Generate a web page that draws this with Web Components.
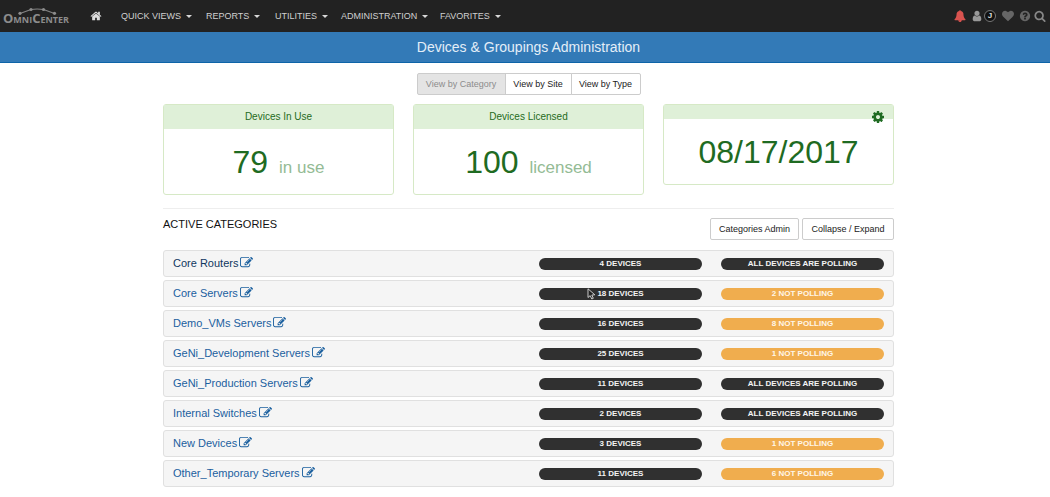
<!DOCTYPE html>
<html lang="en">
<head>
<meta charset="utf-8">
<title>OmniCenter - Devices &amp; Groupings Administration</title>
<style>
html{--sans:"Liberation Sans",Arial,Helvetica,sans-serif}
body{margin:0;background:#fff;font:11px/16px var(--sans);color:#111}
</style>
</head>
<body>
<oc-app></oc-app>
<script>
const ICONS={
home:'M1472 992v480q0 26-19 45t-45 19h-384v-384h-256v384h-384q-26 0-45-19t-19-45v-480q0-1 .5-3t.5-3l575-474 575 474q1 2 1 6zm223-69l-62 74q-8 9-21 11h-3q-13 0-21-7l-692-577-692 577q-12 8-24 7-13-2-21-11l-62-74q-8-10-7-23.5t11-21.5l719-599q32-26 76-26t76 26l244 204v-195q0-14 9-23t23-9h192q14 0 23 9t9 23v408l219 182q10 8 11 21.5t-7 23.5z',
bell:'M912 1696q0-16-16-16-59 0-101.5-42.5t-42.5-101.5q0-16-16-16t-16 16q0 73 51.5 124.5t124.5 51.5q16 0 16-16zm816-288q0 52-38 90t-90 38h-448q0 106-75 181t-181 75-181-75-75-181h-448q-52 0-90-38t-38-90q50-42 91-88t85-119.5 74.5-158.5 50-206 19.5-260q0-152 117-282.5t307-158.5q-8-19-8-39 0-40 28-68t68-28 68 28 28 68q0 20-8 39 190 28 307 158.5t117 282.5q0 139 19.5 260t50 206 74.5 158.5 85 119.5 91 88z',
user:'M1536 1399q0 109-62.5 187t-150.5 78h-854q-88 0-150.5-78t-62.5-187q0-85 8.5-160.5t31.5-152 58.5-131 94-89 134.5-34.5q131 128 313 128t313-128q76 0 134.5 34.5t94 89 58.5 131 31.5 152 8.5 160.5zm-256-887q0 159-112.5 271.5t-271.5 112.5-271.5-112.5-112.5-271.5 112.5-271.5 271.5-112.5 271.5 112.5 112.5 271.5z',
heart:'M896 1664q-26 0-44-18l-624-602q-10-8-27.5-26t-55.5-65.5-68-97.5-53.5-121-23.5-138q0-220 127-344t351-124q62 0 126.5 21.5t120 58 95.5 68.5 76 68q36-36 76-68t95.5-68.5 120-58 126.5-21.5q224 0 351 124t127 344q0 221-229 450l-623 600q-18 18-44 18z',
help:'M1024 1376v-192q0-14-9-23t-23-9h-192q-14 0-23 9t-9 23v192q0 14 9 23t23 9h192q14 0 23-9t9-23zm256-672q0-88-55.5-163t-138.5-116-170-41q-243 0-371 213-15 24 8 42l132 100q7 6 19 6 16 0 25-12 53-68 86-92 34-24 86-24 48 0 85.5 26t37.5 59q0 38-20 61t-68 45q-63 28-115.5 86.5t-52.5 125.5v36q0 14 9 23t23 9h192q14 0 23-9t9-23q0-19 21.5-49.5t54.5-49.5q32-18 49-28.5t46-35 44.5-48 28-60.5 12.5-81zm384 192q0 209-103 385.5t-279.5 279.5-385.5 103-385.5-103-279.5-279.5-103-385.5 103-385.5 279.5-279.5 385.5-103 385.5 103 279.5 279.5 103 385.5z',
search:'M1216 832q0-185-131.5-316.5t-316.5-131.5-316.5 131.5-131.5 316.5 131.5 316.5 316.5 131.5 316.5-131.5 131.5-316.5zm512 832q0 52-38 90t-90 38q-54 0-90-38l-343-342q-179 124-399 124-143 0-273.5-55.5t-225-150-150-225-55.5-273.5 55.5-273.5 150-225 225-150 273.5-55.5 273.5 55.5 225 150 150 225 55.5 273.5q0 220-124 399l343 343q37 37 37 90z',
cog:'M1152 896q0-106-75-181t-181-75-181 75-75 181 75 181 181 75 181-75 75-181zm512-109v222q0 12-8 23t-20 13l-185 28q-19 54-39 91 35 50 107 138 10 12 10 25t-9 23q-27 37-99 108t-94 71q-12 0-26-9l-138-108q-44 23-91 38-16 136-29 186-7 28-36 28h-222q-14 0-24.5-8.5t-11.5-21.5l-28-184q-49-16-90-37l-141 107q-10 9-25 9-14 0-25-11-126-114-165-168-7-10-7-23 0-12 8-23 15-21 51-66.5t54-70.5q-27-50-41-99l-183-27q-13-2-21-12.5t-8-23.5v-222q0-12 8-23t19-13l186-28q14-46 39-92-40-57-107-138-10-12-10-24 0-10 9-23 26-36 98.5-107.5t94.5-71.5q13 0 26 10l138 107q44-23 91-38 16-136 29-186 7-28 36-28h222q14 0 24.5 8.5t11.5 21.5l28 184q49 16 90 37l142-107q9-9 24-9 13 0 25 10 129 119 165 170 7 8 7 22 0 12-8 23-15 21-51 66.5t-54 70.5q26 50 41 98l183 28q13 2 21 12.5t8 23.5z',
edit:'M888 1184l116-116-152-152-116 116v56h96v96h56zm440-720q-16-16-33 1l-350 350q-17 17-1 33t33-1l350-350q17-17 1-33zm80 594v190q0 119-84.5 203.5t-203.5 84.5h-832q-119 0-203.5-84.5t-84.5-203.5v-832q0-119 84.5-203.5t203.5-84.5h832q63 0 117 25 15 7 18 23 3 17-9 29l-49 49q-14 14-32 8-23-6-45-6h-832q-66 0-113 47t-47 113v832q0 66 47 113t113 47h832q66 0 113-47t47-113v-126q0-13 9-22l64-64q15-15 35-7t20 29zm-96-738l288 288-672 672h-288v-288zm444 132l-92 92-288-288 92-92q28-28 68-28t68 28l152 152q28 28 28 68t-28 68z'
};
const define=(name,html,setup)=>{
  const t=document.createElement('template');
  t.innerHTML=html;
  customElements.define(name,class extends HTMLElement{
    constructor(){
      super();
      this.attachShadow({mode:'open'}).append(t.content.cloneNode(true));
    }
    connectedCallback(){ if(setup) setup(this,this.shadowRoot); }
  });
};

define('oc-icon',`<style>
:host{display:block;width:12px;height:12px;flex:none}
svg{display:block;width:100%;height:100%;overflow:visible}
</style><svg viewBox="0 0 1792 1792" aria-hidden="true"><path fill="currentColor"/></svg>`,
(el,r)=>r.querySelector('path').setAttribute('d',ICONS[el.getAttribute('name')]));

define('oc-logo',`<style>
:host{display:block;position:relative;width:72px;height:32px}
a{display:block;padding:10px 0 0 3px;font:bold 13px/16px "Open Sans","Noto Sans",sans-serif;font-variant:small-caps;color:#8c8c8c;text-decoration:none;white-space:nowrap}
svg{position:absolute;left:18px;top:7px;width:40px;height:8px}
</style><a href="#">OmniCenter</a>
<svg viewBox="0 0 40 8" fill="none" stroke="#858585" aria-hidden="true"><path d="M2 6.500L13 2.500Q19 1.500 25.500 2.500L36.500 6.500" stroke-width="1.200"/><g fill="#8c8c8c" stroke="none"><circle cx="2" cy="6.300" r="1.600"/><circle cx="13" cy="2.500" r="1.600"/><circle cx="25.500" cy="2.500" r="1.600"/><circle cx="36.500" cy="6.300" r="1.600"/></g></svg>`);

define('oc-menu',`<style>
:host{display:block}
button{display:flex;align-items:center;gap:5px;border:0;background:none;padding:0;margin:0;font:9px/16px var(--sans);color:#d0d0d0;white-space:nowrap}
i{border:3px solid transparent;border-top-color:#d8d8d8;border-bottom:0}
</style><button type="button" aria-haspopup="true"><slot></slot><i></i></button>`);

define('oc-navbar',`<style>
:host{display:flex;height:32px;background:#222;align-items:center}
.home{color:#ddd;margin:0 19px 0 18px}
nav{display:grid;grid-template-columns:85px 69px 66px 99px auto}
.tools{display:flex;align-items:center;margin-left:auto;padding-right:4px;color:#666}
.tools a{color:inherit;text-decoration:none}
.tools .bell{color:#d9534f;margin-right:5px}
.tools .user{color:#999;margin-right:1px}
.tools .j{box-sizing:border-box;width:12px;height:12px;border:1px solid #777;border-radius:50%;background:#111;color:#ddd;font:bold 8px/10px var(--sans);text-align:center;margin-right:6px}
.tools .heart{margin-right:5px}
.tools .help{margin-right:3px}
.tools .search{color:#888}
</style>
<oc-logo></oc-logo>
<a class="home" href="#" aria-label="Home"><oc-icon name="home"></oc-icon></a>
<nav aria-label="Main"><oc-menu>QUICK VIEWS</oc-menu><oc-menu>REPORTS</oc-menu><oc-menu>UTILITIES</oc-menu><oc-menu>ADMINISTRATION</oc-menu><oc-menu>FAVORITES</oc-menu></nav>
<div class="tools">
<a class="bell" href="#" aria-label="Alerts"><oc-icon name="bell"></oc-icon></a>
<a class="user" href="#" aria-label="User"><oc-icon name="user"></oc-icon></a>
<a class="j" href="#">J</a>
<a class="heart" href="#" aria-label="Favorites"><oc-icon name="heart"></oc-icon></a>
<a class="help" href="#" aria-label="Help"><oc-icon name="help"></oc-icon></a>
<a class="search" href="#" aria-label="Search"><oc-icon name="search"></oc-icon></a>
</div>`);

define('oc-title',`<style>
:host{display:block;background:#337ab7;border-bottom:1px solid #0d64a8;padding:6px 0 6px 7px;text-align:center}
h1{margin:0;font:14px/18px var(--sans);color:#e4eef7}
</style><h1><slot></slot></h1>`);

define('oc-button',`<style>
:host{display:block}
button{display:block;box-sizing:border-box;height:22px;width:100%;border:1px solid #ccc;border-radius:var(--radius,2px);background:#fff;padding:0 7px;font:9px/20px var(--sans);color:#222;white-space:nowrap}
button:disabled{background:#e4e4e4;color:#8c8c8c}
</style><button type="button"><slot></slot></button>`,
(el,r)=>{r.querySelector('button').disabled=el.hasAttribute('off')});

define('oc-views',`<style>
:host{display:flex;justify-content:center}
div{display:grid;grid-template-columns:89px 66px 69px}
oc-button{--radius:0}
oc-button+oc-button{margin-left:-1px}
oc-button:first-child{--radius:2px 0 0 2px}
oc-button:last-child{--radius:0 2px 2px 0}
</style><div role="group" aria-label="View"><oc-button off>View by Category</oc-button><oc-button>View by Site</oc-button><oc-button>View by Type</oc-button></div>`);

define('oc-stat',`<style>
:host{display:block;position:relative;border:1px solid #d6e9c6;border-radius:3px;background:#fff;text-align:center;color:#1f6b22}
h2{margin:0;min-height:14px;background:#dff0d8;font:10px/24px var(--sans)}
.v{padding:17px 0 16px;font:32px/32px var(--sans)}
::slotted(small){font-size:17px;line-height:17px;color:#94bb95;margin-left:2px}
.cog{position:absolute;right:8px;top:5px;padding:0;border:0;background:none;color:inherit}
.cog oc-icon{width:14px;height:14px}
</style><h2></h2><div class="v"><slot></slot></div>`,
(el,r)=>{
  r.querySelector('h2').textContent=el.getAttribute('heading')||'';
  if(el.hasAttribute('settings')){
    const b=document.createElement('button');
    b.className='cog';b.type='button';b.setAttribute('aria-label','Settings');
    b.innerHTML='<oc-icon name="cog"></oc-icon>';
    r.append(b);
  }
});

define('oc-badge',`<style>
:host{display:block;height:12px;border-radius:6px;background:#303030;color:#f4f4f4;text-align:center;font:bold 8px/12px var(--sans);white-space:nowrap}
:host([warn]){background:#f0ad4e;color:#fff6e8}
</style><slot></slot>`);

define('oc-category',`<style>
:host{display:grid;grid-template-columns:minmax(0,1fr) 163px 163px;column-gap:19px;align-items:center;box-sizing:border-box;height:27px;padding:0 9px;border:1px solid #e0e0e0;border-radius:3px;background:#f5f5f5}
h3{display:flex;align-items:center;gap:2px;margin:0;padding-bottom:2px;font:11px/22px var(--sans);white-space:nowrap}
a{color:#1b609f;text-decoration:none}
:host([active]) .name{color:#10375f}
oc-icon{width:13px;height:13px}
.count{position:relative}
svg{position:absolute;left:48px;top:0;width:9px;height:12px}
</style><h3><a class="name" href="#"></a><a href="#" aria-label="Edit category"><oc-icon name="edit"></oc-icon></a></h3>
<oc-badge class="count"></oc-badge><oc-badge class="status"></oc-badge>`,
(el,r)=>{
  r.querySelector('.name').textContent=el.getAttribute('name');
  r.querySelector('.count').textContent=el.getAttribute('count')+' DEVICES';
  const s=r.querySelector('.status'),n=el.getAttribute('down');
  s.textContent=n==='0'?'ALL DEVICES ARE POLLING':n+' NOT POLLING';
  s.toggleAttribute('warn',n!=='0');
  if(el.hasAttribute('pointer'))
    r.querySelector('.count').insertAdjacentHTML('beforeend','<svg viewBox="0 0 9 12" aria-hidden="true"><path d="M1 .8V9.500L3.200 7.600L4.800 11L6.300 10.300L4.800 7L7.800 6.800Z" fill="#222" stroke="#ddd" stroke-width=".9"/></svg>');
});

define('oc-app',`<style>
:host{display:block}
main{padding:10px 0 9px 7px}
.wrap{max-width:731px;margin:0 auto}
.stats{display:grid;grid-template-columns:repeat(3,1fr);gap:19px;align-items:start;margin-top:9px}
header{display:flex;align-items:flex-start;gap:3px;margin-top:13px;padding-top:9px;border-top:1px solid #eee}
h2{margin:0 auto 0 0;font:11px/12px var(--sans);color:#111}
.list{display:grid;gap:3px;margin-top:10px}
.b1{width:89px}.b2{width:92px}
</style>
<oc-navbar></oc-navbar>
<oc-title>Devices &amp; Groupings Administration</oc-title>
<main><div class="wrap">
<oc-views></oc-views>
<div class="stats">
<oc-stat heading="Devices In Use">79 <small>in use</small></oc-stat>
<oc-stat heading="Devices Licensed">100 <small>licensed</small></oc-stat>
<oc-stat settings>08/17/2017</oc-stat>
</div>
<header><h2>ACTIVE CATEGORIES</h2><oc-button class="b1">Categories Admin</oc-button><oc-button class="b2">Collapse / Expand</oc-button></header>
<div class="list">
<oc-category active name="Core Routers" count="4" down="0"></oc-category>
<oc-category pointer name="Core Servers" count="18" down="2"></oc-category>
<oc-category name="Demo_VMs Servers" count="16" down="8"></oc-category>
<oc-category name="GeNi_Development Servers" count="25" down="1"></oc-category>
<oc-category name="GeNi_Production Servers" count="11" down="0"></oc-category>
<oc-category name="Internal Switches" count="2" down="0"></oc-category>
<oc-category name="New Devices" count="3" down="1"></oc-category>
<oc-category name="Other_Temporary Servers" count="11" down="6"></oc-category>
</div>
</div></main>`);
</script>
</body>
</html>
